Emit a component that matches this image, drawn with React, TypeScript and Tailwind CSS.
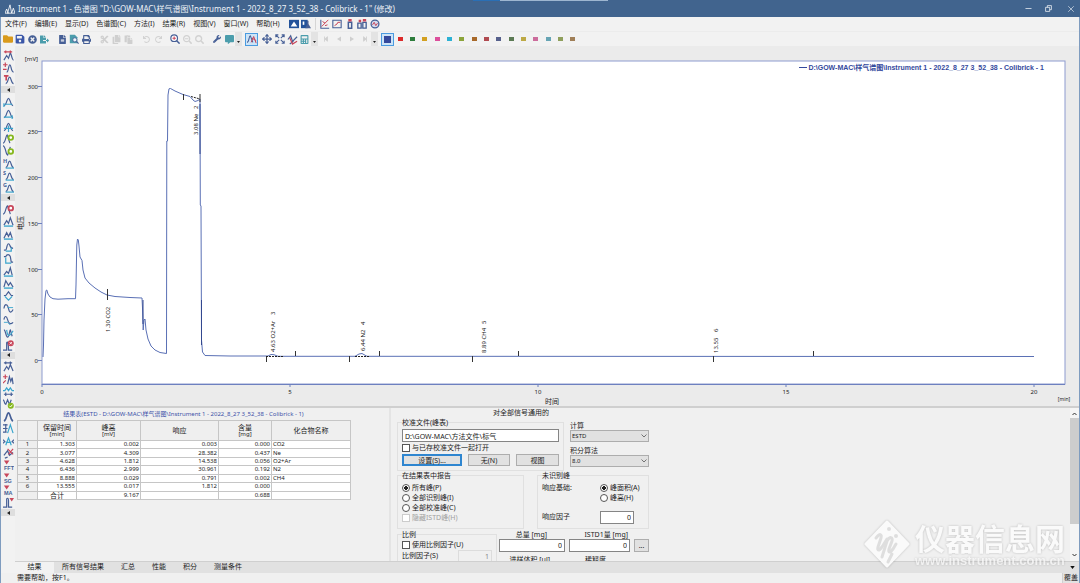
import React from "react";
import {
  FaFolder,
  FaSave,
  FaTimesCircle,
  FaFileExport,
  FaFileAlt,
  FaSearch,
  FaPrint,
  FaCut,
  FaCopy,
  FaPaste,
  FaUndo,
  FaRedo,
  FaSearchMinus,
  FaWrench,
  FaCommentAlt,
  FaCalculator,
  FaStepBackward,
  FaStepForward,
} from "react-icons/fa";
import { Minus, Move, X } from "lucide-react";

const NAVY = "#465f96";
const RED = "#c8465a";
const CYAN = "#3aa5cd";
const TEAL = "#4b9dac";
const GREEN = "#86b81f";

const PEAK = "M1 10.5c3 0 3-8 5-8s2 8 5 8";
const SMALL_PEAK = "M3 10.5c2.5 0 2.5-7 4.200-7s1.800 7 4.300 7";

type StrokeProps = { d: string; c?: string; w?: number };

const P = ({ d, c = NAVY, w = 1.3 }: StrokeProps) => (
  <path d={d} stroke={c} strokeWidth={w} fill="none" />
);

const Icon = ({ children, size = 11 }: { children: React.ReactNode; size?: number }) => (
  <svg width={size} height={size} viewBox="0 0 12 12" aria-hidden="true">
    {children}
  </svg>
);

const redT = <P d="M1 2h5M3.500 2v5" c={RED} w={1.800} />;
const redMark = <path d="M1 0.500h6l-3 4.500z" fill={RED} />;
const base = <P d="M1 11h10" c={CYAN} w={1.500} />;

const tag = (text: string) => (
  <>
    {redMark}
    <text x="1" y="11" fontSize="6" fontWeight="700" fill={NAVY} fontFamily="'Liberation Sans', sans-serif">
      {text}
    </text>
  </>
);

const corner = (text: string) => (
  <>
    <text x="0" y="5" fontSize="6" fontWeight="700" fill={NAVY}>
      {text}
    </text>
    <P d={SMALL_PEAK} />
    <P d="M3 11h9" c={CYAN} />
  </>
);

type Tool = { label: string; icon: React.ReactNode };

const sideGroups: Tool[][] = [
  [
    { label: "Peak width", icon: <><P d="M1 11l3-5 2 3 2-6c1 0 1.500 8 3.500 8" /><P d="M1 2h9M3 .5v3M8 .5v3" c={RED} /></> },
    { label: "Threshold", icon: <><P d="M4 11c2 0 2-8 3.500-8s1 8 4 8" /><P d="M0 3h5M2.500 .5v5M0 8h4" c={RED} /></> },
    { label: "Global threshold", icon: <>{redT}<P d={SMALL_PEAK} /></> },
  ],
  [
    { label: "Peak start", icon: <><P d={PEAK} /><P d="M2 9h8M1 8v4" c={CYAN} /></> },
    { label: "Peak end", icon: <><P d={PEAK} /><P d="M1 10h8M10 8v4" c={CYAN} /></> },
    { label: "Both ends", icon: <><P d={PEAK} /><P d="M1 8h10M6 5v7" c={CYAN} /></> },
    { label: "Add positive", icon: <><P d="M0 11c3 0 3-9 4.500-9l3 9" /><circle cx="8.500" cy="5" r="2.500" stroke={GREEN} strokeWidth="2" fill="#fff" /></> },
    { label: "Add negative", icon: <><P d="M0 1c3 0 3 10 5 10l3-9" /><circle cx="8.500" cy="7" r="2.500" stroke={GREEN} strokeWidth="2" fill="#fff" /></> },
    { label: "Height", icon: corner("H") },
    { label: "Slope", icon: corner("S") },
    { label: "Group", icon: corner("G") },
  ],
  [
    { label: "Delete peak", icon: <><P d="M0 11c3 0 3-9 5-9l3 9" /><circle cx="8.500" cy="4.500" r="2.500" stroke={RED} strokeWidth="2" fill="#fff" /></> },
    { label: "Valley", icon: <><P d="M1 10l3-5 2 3 2-6 3 8" />{base}</> },
    { label: "Together", icon: <><P d="M1 10l3-6 2 4 2-4 2 6" />{base}</> },
    { label: "Forward horizontal", icon: <><P d="M1 10h2c1 0 1-7 3-7s1 5 5 5" /><P d="M3 11h6V7" c={CYAN} /></> },
    { label: "Backward horizontal", icon: <><P d="M1 4h2c1-3 4-3 5 0l1 6h2" /><P d="M3 5v6h6" c={CYAN} /></> },
    { label: "Front tangent", icon: <><P d="M1 10l3-4 2 2 2-6 2 8" />{base}</> },
    { label: "Tail tangent", icon: <><P d="M1 10l2-7 3 5 2-3 3 5" />{base}</> },
    { label: "Clamp", icon: <><P d="M1 6h2l3-4 3 4h2" /><P d="M2 7l4 4 4-4" c={CYAN} /></> },
    { label: "Clamp negative", icon: <><P d="M1 6c1-6 4-5 5 0s3 5 5 1" /><P d="M5 5h6" c={CYAN} w={1} /></> },
    { label: "No negative", icon: <><P d="M1 5c1-5 3-4 4 0s3 6 6 3" /><P d="M1 8h4l3 3" c={CYAN} w={1} /></> },
    { label: "Solvent", icon: <><P d="M1 2c2 0 2 8 4 8s2-8 3-8l2 7" /><P d="M4 2c1 8 3 8 7 1" c={CYAN} /></> },
    { label: "Remove", icon: <><P d="M0 11h4V3c1-2 2 0 2 8h4" /><circle cx="8.500" cy="3.500" r="3.200" fill={RED} /><P d="M7.200 2.200l2.600 2.600M9.800 2.200l-2.600 2.600" c="#fff" w={0.900} /></> },
  ],
  [
    { label: "Noise width", icon: <><P d="M1 11l3-5 2 3 2-5 3 7" /><P d="M1 2h9M3 .5v3M8 .5v3" /></> },
    { label: "Noise threshold", icon: <><P d="M5 11l2-8 1.500 5L10 4l1 7" /><P d="M0 3h5M2.500 .5v5M0 10l3-3" c={RED} /></> },
    { label: "Shift", icon: <><P d="M0 5h2l2-3 2 3 2-3 2 3h2" c={CYAN} /><P d="M1 9h10M3 7v4M9 7v4" /></> },
    { label: "Accept", icon: <><P d="M0 2c2 0 1 5 3 5l2-5 2 5 2-5" /><circle cx="8.500" cy="8.500" r="3.300" fill={GREEN} /><P d="M7 8.500l1.200 1.300 2-2.500" c="#fff" w={1} /></> },
    { label: "Peak", icon: <><P d="M1 11c3-1 3-9 5-9s2 8 5 9" w={1.800} /></> },
    { label: "Scale", icon: <><P d="M5 11l3-9 3 9" c={CYAN} /><P d="M0 2h5M0 6h5M0 10h4M3 1v9" /></> },
    { label: "Move", icon: <><P d="M3 10l3-8 3 8M3 7h6" c={CYAN} /><P d="M0 4l2 2-2 2M12 4l-2 2 2 2" /></> },
    { label: "Undo step", icon: <><P d="M1 8l4-5 2 5 4-3M2 11l3-1" /><P d="M5 1l6 6M11 1L6 7" c={RED} /></> },
    { label: "FFT", icon: tag("FFT") },
    { label: "Savitzky-Golay", icon: tag("SG") },
    { label: "Moving average", icon: tag("MA") },
    { label: "Spike", icon: <><P d="M0 11h4V2c1-1 2-1 2 2v7h4" /><path d="M7 1h5l-2.500 4z" fill={RED} /></> },
  ],
];

const fileTools: Tool[][] = [
  [
    { label: "Open", icon: <FaFolder size={10} color="#d99a1c" /> },
    { label: "Save", icon: <FaSave size={10} color="#3a56a8" /> },
    { label: "Close", icon: <FaTimesCircle size={9} color={NAVY} /> },
    { label: "Export", icon: <FaFileExport size={9} color={TEAL} /> },
  ],
  [
    { label: "Report", icon: <FaFileAlt size={9} color={NAVY} /> },
    { label: "Preview", icon: <Icon size={10}><path d="M1 1h6l3 3v7H1z" fill={TEAL} /><circle cx="7" cy="7" r="2.500" fill="#eef6fa" stroke={NAVY} /><P d="M9 9l2.500 2.500" /></Icon> },
    { label: "Print", icon: <FaPrint size={9} color={NAVY} /> },
  ],
  [
    { label: "Cut", icon: <FaCut size={9} color="#cfcfcf" /> },
    { label: "Copy", icon: <FaCopy size={9} color="#cfcfcf" /> },
    { label: "Paste", icon: <FaPaste size={9} color="#cfcfcf" /> },
  ],
  [
    { label: "Undo", icon: <FaUndo size={7} color="#d2d2d2" /> },
    { label: "Redo", icon: <FaRedo size={7} color="#d2d2d2" /> },
  ],
  [
    { label: "Zoom in", icon: <Icon size={10}><circle cx="5" cy="5" r="4" fill="#fff" stroke={NAVY} strokeWidth="1.400" /><P d="M8 8l3.500 3.500" w={1.800} /><P d="M5 3v4M3 5h4" c={RED} /></Icon> },
    { label: "Zoom out", icon: <FaSearchMinus size={9} color="#d2d2d2" /> },
    { label: "Zoom", icon: <FaSearch size={9} color="#d2d2d2" /> },
  ],
];

const viewTools: Tool[] = [
  { label: "Move", icon: <Move size={10} color={NAVY} strokeWidth={3} /> },
  { label: "Fit", icon: <Icon size={10}><P d="M1 4V1h3M8 1h3v3M11 8v3H8M4 11H1V8M1 1l4 4M11 1L7 5M11 11L7 7M1 11l4-4" /></Icon> },
  { label: "Annotate", icon: <Icon><P d="M1 6l3-4 2 6 5-5M3 11l4-3" /><P d="M3 4l3 7 5-3" c={RED} /></Icon> },
  { label: "Calculator", icon: <FaCalculator size={9} color={TEAL} /> },
];

const navTools: Tool[] = [
  { label: "First", icon: <FaStepBackward size={6} color="#cfcfcf" /> },
  { label: "Previous", icon: <Icon size={6}><path d="M10 1v10L2 6z" fill="#cfcfcf" /></Icon> },
  { label: "Next", icon: <Icon size={6}><path d="M2 1v10l8-5z" fill="#cfcfcf" /></Icon> },
  { label: "Last", icon: <FaStepForward size={6} color="#cfcfcf" /> },
];

const swatches = [
  "#dc2a2a", "#2e7d3c", "#d3a021", "#dc4f9c", "#2cb1d4", "#8ba43a", "#a8692a", "#b04a50",
  "#56608c", "#5b7a54", "#bda945", "#cc6c9c", "#66a4b4", "#8f9f5c", "#a07f58",
];

const menus = [
  ["文件", "F"], ["编辑", "E"], ["显示", "D"], ["色谱图", "C"], ["方法", "I"],
  ["结果", "R"], ["视图", "V"], ["窗口", "W"], ["帮助", "H"],
];

const menuTools: Tool[][] = [
  [
    { label: "Main window", icon: <Icon size={10}><path d="M0 1h12v10H0z" fill="#23529a" /><path d="M2 9l4-6 4 6z" fill="#fff" /></Icon> },
    { label: "Instrument", icon: <Icon size={10}><path d="M0 1h8v10H0z" fill="#23529a" /><path d="M7 2h2v4l3 5H5l2-4z" fill={NAVY} /><path d="M2 3h2v4H2z" fill="#fff" /></Icon> },
  ],
  [
    { label: "Calibration", icon: <Icon size={10}><P d="M1 1v10h10" /><P d="M2 9l8-8M3 3l3 2M6 8l3-1" c={RED} w={1.200} /></Icon> },
    { label: "Chromatogram", icon: <Icon size={10}><P d="M1 1.500h10v9H1z" /><P d="M3 8l3-2 1-2h3" c={RED} w={1.200} /></Icon> },
    { label: "Single", icon: <Icon size={10}><P d="M4 4h4v7H4z" w={1.800} /><path d="M4 0h4v3H4z" fill={RED} /></Icon> },
    { label: "Sequence", icon: <Icon size={10}><P d="M1 5h4v6H1zM7 4h4v7H7z" w={1.600} /><path d="M2 1h3v3H2zM7 0h4v3H7z" fill={RED} /></Icon> },
    { label: "Device", icon: <Icon size={10}><circle cx="6" cy="6" r="4.700" stroke={NAVY} strokeWidth="1.500" fill="#d5dcef" /><P d="M3 7l2-3 2 4 2-3" c={RED} w={1.200} /></Icon> },
  ],
];

const ToolButtons = ({ tools, className }: { tools: Tool[]; className: string }) => (
  <div className={`flex h-full shrink-0 ${className}`}>
    {tools.map((t) => (
      <button key={t.label} aria-label={t.label} className="flex min-w-0 flex-1 items-center justify-center">
        {t.icon}
      </button>
    ))}
  </div>
);

const DropArrow = () => (
  <button aria-label="More" className="flex h-full w-[7px] shrink-0 items-end justify-center bg-[#e3e3e3] pb-[3px]">
    <svg width="3" height="2" viewBox="0 0 6 4">
      <path d="M0 0h6L3 4z" fill="#222" />
    </svg>
  </button>
);

const TitleBar = () => (
  <header className="relative flex h-[17px] shrink-0 items-center bg-[#41648e] pl-[5px] text-[8px] leading-[12px] text-[#eef2f7]">
    <div className="absolute top-0 left-[473px] flex h-px">
      <span className="w-[27px] bg-[#2a6fb5]" />
      <span className="w-[108px] bg-[#9db6d0]" />
    </div>
    <Icon size={10}>
      <path d="M0 11l2-5 2 5zM3 11l3-10 2 10zM8 11l2-6 2 6z" fill="none" stroke="#fff" strokeWidth="1" />
    </Icon>
    <h1 className="ml-[3px] flex-1 whitespace-nowrap">
      Instrument 1 - 色谱图 "D:\GOW-MAC\样气谱图\Instrument 1 - 2022_8_27 3_52_38 - Colibrick - 1" (修改)
    </h1>
    <button aria-label="Minimize" className="mr-3"><Minus size={9} /></button>
    <button aria-label="Restore" className="mr-[14px]">
      <Icon size={7}>
        <path d="M1 4h7v7H1zM4 4V1h7v7H8" fill="none" stroke="#fff" strokeWidth="1.200" />
      </Icon>
    </button>
    <button aria-label="Close window" className="mr-1"><X size={10} strokeWidth={1.500} /></button>
  </header>
);

const MenuBar = () => (
  <nav className="flex h-[15px] shrink-0 items-center border-b border-[#ececec] bg-[#f2f2f2] pl-1">
    {menus.map(([name, key]) => (
      <button key={name} className="mr-2 whitespace-nowrap">
        {name}({key})
      </button>
    ))}
    <ToolButtons tools={menuTools[0]} className="w-[25px]" />
    <div className="mr-[3px] ml-[2px] h-3 w-px bg-[#d5d5d5]" />
    <ToolButtons tools={menuTools[1]} className="w-[62px]" />
  </nav>
);

const ToolBar = () => (
  <div className="flex h-[14px] shrink-0 items-center bg-[#f2f2f2] pl-[1px]">
    <div className="flex h-full gap-[5px]">
      <ToolButtons tools={fileTools[0]} className="w-[49px]" />
      <ToolButtons tools={fileTools[1]} className="w-[37px]" />
      <ToolButtons tools={fileTools[2]} className="w-[37px]" />
      <ToolButtons tools={fileTools[3]} className="w-[24px]" />
      <ToolButtons tools={fileTools[4]} className="w-[37px]" />
    </div>
    <ToolButtons
      tools={[
        { label: "Settings", icon: <FaWrench size={8} color={NAVY} /> },
        { label: "Comment", icon: <FaCommentAlt size={9} color={TEAL} /> },
      ]}
      className="ml-[5px] w-[24px]"
    />
    <DropArrow />
    <button aria-label="Peaks" className="mx-[3px] flex size-[13px] shrink-0 items-center justify-center border border-[#4a9be0] bg-[#cde4f7]">
      <Icon size={10}>
        <P d="M0 10c3 0 2-8 4-8l3 8" />
        <P d="M5 10l3-7 3 8M6 5l5 3" c={RED} w={1.200} />
      </Icon>
    </button>
    <ToolButtons tools={viewTools} className="w-[50px]" />
    <DropArrow />
    <ToolButtons tools={navTools} className="ml-[2px] w-[51px]" />
    <DropArrow />
    <button aria-label="Signal 1" className="ml-[3px] flex size-[13px] shrink-0 items-center justify-center border border-[#4a9be0] bg-[#cde4f7]">
      <span className="size-[7px] bg-[#34499c]" />
    </button>
    <div className="flex h-full w-[185px] shrink-0">
      {swatches.map((color, i) => (
        <button key={color} aria-label={`Signal ${i + 2}`} className="flex flex-1 items-center justify-center">
          <span className="h-1 w-[5px]" style={{ backgroundColor: color }} />
        </button>
      ))}
    </div>
  </div>
);

const SideBar = () => (
  <aside className="flex w-[14px] shrink-0 flex-col bg-[#f2f2f2] pt-[3px] pb-[55px]">
    {sideGroups.map((group, g) => (
      <React.Fragment key={g}>
        {group.map((t) => (
          <button key={t.label} aria-label={t.label} className="flex min-h-0 flex-1 items-center justify-center">
            <Icon>{t.icon}</Icon>
          </button>
        ))}
        <button aria-label="Collapse group" className="mb-[2px] flex h-[7px] shrink-0 items-center justify-center bg-[#dedede]">
          <svg width="3" height="4" viewBox="0 0 3 4"><path d="M3 0v4L0 2z" fill="#222" /></svg>
        </button>
      </React.Fragment>
    ))}
  </aside>
);

const TRACE =
  "M43 357L43.500 345L44 320L45 299L46 290.500L46.800 290L48 294L50 297L53 298.700L58 299.200L68 298.700L75.500 298.700" +
  "L76 285L76.800 245L77.500 239L78.300 240L79 246L80 257L82 260.500L83 270L85 278L89 283L95 288L101 292L107 295L115 296.500" +
  "L130 297.500L142 298L142.500 308L143.200 330L144 320L145 319L146 330L148 339L151 346L155 350L160 352.500L166.500 353.500" +
  "L166.800 141L167.500 141L168 95L169 88.800L170.500 88.500L175 91L183 94.500L190 96.500L193 100L195 101.500L198 100.500L200 99" +
  "L200.300 205L201 206L201.500 340L202.500 352L205 355.500L230 356L268 356L271 354.500L274 354.700L278 356.300L355 356.300" +
  "L359 354L362 353.500L367 356.300L1034 356.500";

const yTicks = [
  [300, 87], [250, 132], [200, 178], [150, 224], [100, 270], [50, 315], [0, 361],
];
const xTicks = [
  [0, 42], [5, 290], [10, 538], [15, 786], [20, 1034],
];
const peakLabels = [
  { x: 110, y: 332, text: "1.30 CO2", n: "", ny: 0 },
  { x: 198, y: 135, text: "3.08 Ne", n: "2", ny: 109 },
  { x: 275, y: 352, text: "4.63 O2+Ar", n: "3", ny: 315 },
  { x: 365, y: 351, text: "6.44 N2", n: "4", ny: 325 },
  { x: 486, y: 353, text: "8.89 CH4", n: "5", ny: 324 },
  { x: 718, y: 353, text: "13.55", n: "6", ny: 332 },
];

const Chart = () => (
  <section className="min-h-0 flex-1 bg-[#ebebeb]">
    <svg className="h-full w-full" viewBox="15 46 1064 360" fontSize="7" fill="#222">
      <rect x="42" y="61" width="1023" height="323" fill="#fff" stroke="#8d9bcf" strokeWidth="1" />
      <text x="38" y="61" textAnchor="end" fontSize="6">[mV]</text>
      {yTicks.map(([v, y]) => (
        <g key={v}>
          <path d={`M38 ${y - 0.5}h4`} stroke="#6d80bf" />
          <text x="38" y={y + 2} textAnchor="end" fontSize="6">{v}</text>
        </g>
      ))}
      <path d="M42 384.500h1023" stroke="#6d80bf" />
      {xTicks.map(([v, x]) => (
        <g key={v}>
          <path d={`M${x} 384v3`} stroke="#6d80bf" />
          <text x={x} y="394" textAnchor="middle" fontSize="6">{v}</text>
        </g>
      ))}
      <text x="552" y="404" textAnchor="middle">时间</text>
      <text x="1064" y="401" textAnchor="middle" fontSize="5">[min]</text>
      <text transform="translate(23 223) rotate(-90)" textAnchor="middle">电压</text>
      <path d={TRACE} fill="none" stroke="#5a70b5" strokeWidth="1" strokeLinejoin="round" />
      <path d="M143 300v24M200 104v50M201.500 300v45" stroke="#33488f" strokeWidth="1" fill="none" />
      <path
        d="M107.500 289v11M183.500 94v6M200 94v8M266.500 356v6M295.500 351v5M349.500 356v6M379.500 351v5M472.500 356v6M518.500 351v5M713.500 356v6M813.500 351v5"
        stroke="#333"
      />
      <path d="M191 96.500l9 2.500M266 356.500h17M355 356.500h15" stroke="#222" strokeDasharray="2 1" />
      {peakLabels.map((p) => (
        <g key={p.text} fontSize="6">
          <text transform={`translate(${p.x} ${p.y}) rotate(-90)`}>{p.text}</text>
          {p.n && <text transform={`translate(${p.x} ${p.ny}) rotate(-90)`}>{p.n}</text>}
        </g>
      ))}
      <path d="M799 67.500h8" stroke="#34499c" />
      <text x="1044" y="70" textAnchor="end" fontWeight="700" fill="#34499c" fontFamily="'Liberation Sans', 'Noto Sans CJK SC', sans-serif">
        D:\GOW-MAC\样气谱图\Instrument 1 - 2022_8_27 3_52_38 - Colibrick - 1
      </text>
    </svg>
  </section>
);

const rows = [
  ["1", "1.303", "0.002", "0.003", "0.000", "CO2"],
  ["2", "3.077", "4.309", "28.382", "0.437", "Ne"],
  ["3", "4.628", "1.812", "14.538", "0.056", "O2+Ar"],
  ["4", "6.436", "2.999", "30.961", "0.192", "N2"],
  ["5", "8.888", "0.029", "0.791", "0.002", "CH4"],
  ["6", "13.555", "0.017", "1.812", "0.000", ""],
  ["", "合计", "9.167", "", "0.688", ""],
];

const headers = [
  ["", ""], ["保留时间", "[min]"], ["峰高", "[mV]"], ["响应", ""], ["含量", "[mg]"], ["化合物名称", ""],
];

const cellAlign = (cell: string, c: number) => {
  if (c === 0) return "bg-[#efefef] text-center text-[6px]";
  if (c === 5) return "text-left text-[6px]";
  return cell === "合计" ? "text-center" : "text-right text-[6px]";
};

const ResultTable = () => (
  <section className="w-[376px] shrink-0 border-r-2 border-[#e4e4e4] pl-[2px]">
    <h2 className="mt-[1px] h-[11px] w-[333px] text-center text-[6px] leading-[10px] whitespace-nowrap text-[#3c50a8]">
      结果表(ESTD - D:\GOW-MAC\样气谱图\Instrument 1 - 2022_8_27 3_52_38 - Colibrick - 1)
    </h2>
    <table className="h-[80px] w-[333px] table-fixed border-collapse bg-white leading-[7px]">
      <colgroup>
        <col className="w-[20px]" />
        <col className="w-[39px]" />
        <col className="w-[64px]" />
        <col className="w-[78px]" />
        <col className="w-[53px]" />
        <col className="w-[79px]" />
      </colgroup>
      <thead>
        <tr className="h-[20px] bg-[#efefef]">
          {headers.map(([name, unit], i) => (
            <th key={i} className="border border-[#c6c6c6] p-0 font-normal">
              {name}
              {unit && <div className="text-[6px] leading-[6px]">{unit}</div>}
            </th>
          ))}
        </tr>
      </thead>
      <tbody>
        {rows.map((row, r) => (
          <tr key={r}>
            {row.map((cell, c) => (
              <td key={c} className={`border border-[#c6c6c6] px-[1px] py-0 whitespace-nowrap ${cellAlign(cell, c)}`}>
                {cell}
              </td>
            ))}
          </tr>
        ))}
      </tbody>
    </table>
  </section>
);

const radioClass =
  "size-2 shrink-0 appearance-none rounded-full border border-[#555] bg-white checked:bg-[radial-gradient(#222_45%,white_50%)]";
const checkClass = "size-2 shrink-0 appearance-none border border-[#555] bg-white disabled:border-[#ccc]";
const inputClass = "h-[13px] border border-[#858585] bg-white px-[2px] leading-[10px] outline-none";
const buttonClass = "h-3 border border-[#adadad] bg-[#e1e1e1] leading-[9px]";
const fieldsetClass = "min-w-0 border border-[#e0e0e0] px-1";
const legendClass = "h-[9px] leading-[9px]";

type ChoiceProps = { type: string; label: string; name: string; defaultChecked?: boolean; disabled?: boolean };

const Choice = ({ type, label, name, ...rest }: ChoiceProps) => (
  <label className={`flex h-[10px] items-center gap-[2px] whitespace-nowrap ${rest.disabled ? "text-[#a0a0a0]" : ""}`}>
    <input type={type} name={name} className={type === "radio" ? radioClass : checkClass} {...rest} />
    {label}
  </label>
);

const Select = ({ label, value }: { label: string; value: string }) => (
  <label className="block h-[25px]">
    <span className="block h-[9px] leading-[9px]">{label}</span>
    <span className="relative block">
      <select className="block h-3 w-full appearance-none border border-[#adadad] bg-[#e1e1e1] px-[1px] text-[6px] leading-[9px]">
        <option>{value}</option>
      </select>
      <svg className="pointer-events-none absolute top-1 right-[2px]" width="6" height="4" viewBox="0 0 6 4">
        <path d="M.5 .5L3 3l2.500-2.500" fill="none" stroke="#555" strokeWidth=".8" />
      </svg>
    </span>
  </label>
);

const SettingsForm = () => (
  <form className="w-[252px] shrink-0">
    <h2 className="h-[10px] pr-1 text-center leading-[10px]">对全部信号通用的</h2>
    <div className="flex h-[53px] gap-[6px]">
      <fieldset className={`w-[167px] ${fieldsetClass}`}>
        <legend className={legendClass}>校准文件(峰表)</legend>
        <input aria-label="校准文件" className={`mt-[2px] block w-[157px] ${inputClass}`} defaultValue="D:\GOW-MAC\方法文件\标气" />
        <div className="my-[1px]">
          <Choice type="checkbox" name="linked" label="与已存校准文件一起打开" />
        </div>
        <div className="flex gap-[6px]">
          <button type="button" className="h-3 w-[60px] border-2 border-[#2f86d0] bg-[#e1e1e1] leading-[7px]">设置(S)...</button>
          <button type="button" className={`w-[42px] ${buttonClass}`}>无(N)</button>
          <button type="button" className={`w-[43px] ${buttonClass}`}>视图</button>
        </div>
      </fieldset>
      <div className="flex-1 pt-[3px]">
        <Select label="计算" value="ESTD" />
        <Select label="积分算法" value="8.0" />
      </div>
    </div>
    <div className="mb-[1px] flex h-[58px] justify-between">
      <fieldset className={`w-[127px] ${fieldsetClass}`}>
        <legend className={legendClass}>在结果表中报告</legend>
        <div className="mt-[3px]">
          <Choice type="radio" name="report" label="所有峰(P)" defaultChecked />
          <Choice type="radio" name="report" label="全部识别峰(I)" />
          <Choice type="radio" name="report" label="全部校准峰(C)" />
          <Choice type="checkbox" name="hide" label="隐藏ISTD峰(H)" disabled />
        </div>
      </fieldset>
      <fieldset className={`w-[112px] ${fieldsetClass}`}>
        <legend className={legendClass}>未识别峰</legend>
        <div className="mt-[3px] flex justify-between">
          <span className="leading-[10px]">响应基础:</span>
          <div className="w-[44px]">
            <Choice type="radio" name="basis" label="峰面积(A)" defaultChecked />
            <Choice type="radio" name="basis" label="峰高(H)" />
          </div>
        </div>
        <label className="mt-2 flex items-center justify-between pr-[10px]">
          响应因子
          <input className={`w-[34px] text-right ${inputClass}`} defaultValue="0" />
        </label>
      </fieldset>
    </div>
    <div className="flex gap-[2px]">
      <fieldset className={`w-[100px] ${fieldsetClass}`}>
        <legend className={legendClass}>比例</legend>
        <div className="mt-[1px]">
          <Choice type="checkbox" name="scale" label="使用比例因子(U)" />
        </div>
        <label className="flex items-center justify-between">
          比例因子(S)
          <input disabled className="h-[13px] w-[34px] border border-[#dcdcdc] px-[2px] text-right text-[#888]" defaultValue="1" />
        </label>
      </fieldset>
      <div className="grid flex-1 grid-cols-[66px_61px_15px] gap-x-1 text-right">
        <label className="block">
          <span className="block h-[9px] pr-[18px] leading-[9px]">总量 [mg]</span>
          <input className={`block w-full text-right ${inputClass}`} defaultValue="0" />
        </label>
        <label className="block">
          <span className="block h-[9px] pr-[2px] leading-[9px]">ISTD1量 [mg]</span>
          <input className={`block w-full text-right ${inputClass}`} defaultValue="0" />
        </label>
        <button type="button" className="mt-[9px] h-[13px] border border-[#adadad] bg-[#e1e1e1] text-center leading-[9px]">...</button>
        <span className="mt-[2px] pr-[15px] leading-[9px]">进样体积 [µl]</span>
        <span className="mt-[2px] pr-6 leading-[9px]">稀释度</span>
      </div>
    </div>
  </form>
);

// floats over the lower right corner, across the panel and the tab strip
const Watermark = () => (
  <div className="pointer-events-none absolute right-[14px] bottom-[5px] flex items-center gap-1 text-[#fafafa] drop-shadow-[0_0_1px_rgba(0,0,0,0.22)]">
    <svg width="48" height="48" viewBox="0 0 48 48">
      <path d="M24 2l21 22-21 22L3 24z" fill="#fafafa" stroke="#fafafa" strokeWidth="3" strokeLinejoin="round" />
      <g fill="none" stroke="#dedede" strokeWidth="3" strokeLinecap="round" strokeLinejoin="round">
        <path d="M13 18c4-5 6-4 5 0l-3 9c-1 4 1 4 4 0l5-8" />
        <path d="M19 37l5-16c3-5 6-4 5 0l-3 8c-1 4 1 4 4 0l3-5M25 42l4-8" />
      </g>
      <circle cx="26" cy="9" r="2" fill="#dedede" />
      <circle cx="33" cy="16" r="2" fill="#dedede" />
    </svg>
    <div className="w-[150px]">
      <div className="text-[30px] leading-[34px] font-bold whitespace-nowrap">仪器信息网</div>
      <div className="font-['Liberation_Sans',sans-serif] text-[13px] leading-[10px] font-bold whitespace-nowrap opacity-80">
        www.instrument.com.cn
      </div>
    </div>
  </div>
);

const ScrollBar = () => (
  <div className="ml-auto flex w-[9px] shrink-0 flex-col items-center bg-[#f5f5f5] py-[2px]">
    <svg width="5" height="8" viewBox="0 0 5 8"><path d="M.5 5l2-2 2 2" fill="none" stroke="#333" /></svg>
    <div className="h-[106px] w-full bg-[#cdcdcd]" />
    <svg className="mt-auto" width="5" height="8" viewBox="0 0 5 8"><path d="M.5 3l2 2 2-2" fill="none" stroke="#333" /></svg>
  </div>
);

const tabs = ["所有信号结果", "汇总", "性能", "积分", "测量条件"];

const TabStrip = () => (
  <div className="flex h-[12px] shrink-0 items-center border-t border-[#cfcfcf] bg-[#e1e1e1]">
    <button className="h-full w-[39px] bg-[#f2f2f2]">结果</button>
    <div className="flex flex-1 gap-[17px] pl-2">
      {tabs.map((tab) => (
        <button key={tab} className="whitespace-nowrap">{tab}</button>
      ))}
    </div>
    <svg className="mr-1" width="5" height="3" viewBox="0 0 6 4"><path d="M0 0h6L3 4z" fill="#111" /></svg>
  </div>
);

const App: React.FC = () => {
  return (
    <div className="flex h-screen flex-col overflow-hidden bg-[#f0f0f0] font-['Noto_Sans','Noto_Sans_CJK_SC',sans-serif] text-[7px] text-[#1c1c1c]">
      <TitleBar />
      <div className="flex min-h-0 flex-1 flex-col border-x border-[#7f9cbf]">
        <MenuBar />
        <ToolBar />
        <div className="flex min-h-0 flex-1">
          <SideBar />
          <main className="relative flex min-w-0 flex-1 flex-col">
            <Chart />
            <div className="flex h-[155px] shrink-0 overflow-hidden border-t-2 border-[#cfcfcf]">
              <ResultTable />
              <div className="flex min-w-0 flex-1 pl-[6px]">
                <SettingsForm />
                <ScrollBar />
              </div>
            </div>
            <TabStrip />
            <Watermark />
          </main>
        </div>
        <footer className="flex h-[10px] shrink-0 items-center justify-between pl-4 leading-[10px]">
          <span>需要帮助，按F1。</span>
          <span className="border-l border-[#d0d0d0] bg-[#e2e2e2] px-[1px]">覆盖</span>
        </footer>
      </div>
    </div>
  );
};

export default App;
